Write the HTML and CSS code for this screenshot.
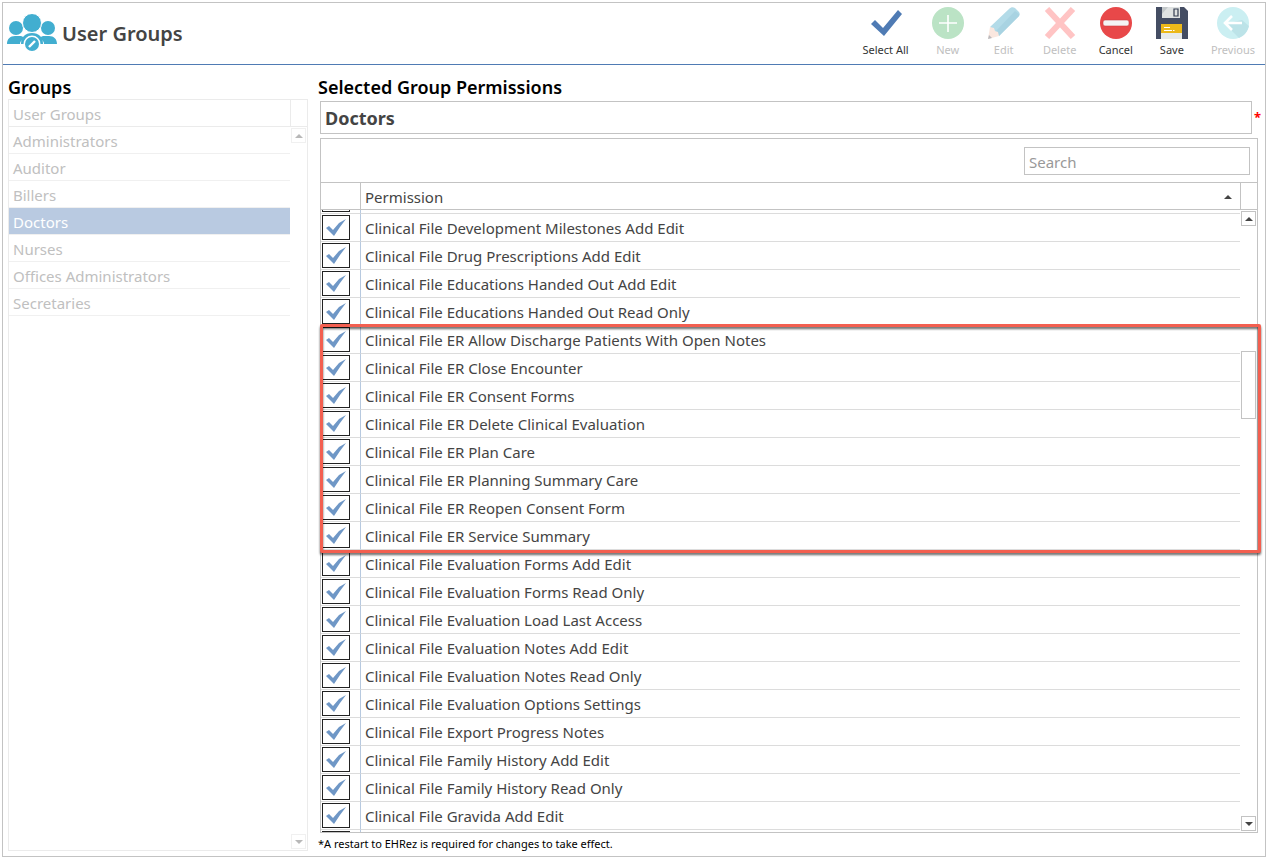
FILE: index.html
```html
<!DOCTYPE html>
<html lang="en">
<head>
<meta charset="UTF-8">
<meta name="viewport" content="width=device-width, initial-scale=1.0">
<title>User Groups</title>
<link rel="stylesheet" href="styles.css">
</head>
<body>
<div class="window">
  <header class="header">
    <svg class="logo" viewBox="0 0 50 38" aria-hidden="true">
      <g fill="#42aed0">
        <circle cx="9" cy="14" r="7"/>
        <circle cx="41" cy="14" r="7"/>
        <path d="M0 30c0-5 3-8 8-8h6c3 1 3 2 3 3-3 1-4 3-4 5z"/>
        <path d="M50 30c0-5-3-8-8-8h-6c-3 1-3 2-3 3 3 1 4 3 4 5z"/>
        <circle cx="25" cy="9" r="9.500" stroke="#fff" stroke-width="1"/>
        <path d="M14 30c0-7 4-11 11-11s11 4 11 11z"/>
      </g>
      <circle cx="25" cy="30" r="8.500" fill="#fff"/>
      <circle cx="25" cy="30" r="7" fill="#42aed0"/>
      <path d="M22 33l6-6" stroke="#fff" stroke-width="2.4"/>
    </svg>
    <h1>User Groups</h1>
    <nav class="toolbar">
      <button type="button">
        <svg viewBox="0 0 32 32"><path d="M1 17l4-4 8 8L28 3l4 4-18 22z" fill="#4f7bb4"/></svg>
        Select All
      </button>
      <button type="button" disabled>
        <svg viewBox="0 0 32 32"><circle cx="16" cy="16" r="16" fill="#bbe3c5"/><path d="M16 8v17M7 16h18" stroke="#fff" stroke-width="1.6"/></svg>
        New
      </button>
      <button type="button" disabled>
        <svg viewBox="0 0 32 32">
          <path d="M2 20L21 2c2-2 4-2 6-1l4 4c1 2 1 3 0 4L11 29z" fill="#b3dbe8"/>
          <path d="M11 29L31 9V7l-4-3L7 25z" fill="#a8d3e2"/>
          <path d="M2 20L0 32l11-3-1-4-3-1-1-3z" fill="#fae7df"/>
          <path d="M1 28l-1 4 4-1z" fill="#b9b9bd"/>
        </svg>
        Edit
      </button>
      <button type="button" disabled>
        <svg viewBox="0 0 32 32"><path d="M3 2l26 28M29 2L3 30" stroke="#ffc4c4" stroke-width="6"/></svg>
        Delete
      </button>
      <button type="button">
        <svg viewBox="0 0 32 32"><circle cx="16" cy="16" r="16" fill="#e84849"/><rect x="3" y="13" width="26" height="6" rx="2" fill="#f4f4f4" stroke="#cf3c3f" stroke-width=".6"/></svg>
        Cancel
      </button>
      <button type="button">
        <svg viewBox="0 0 32 32">
          <path d="M0 0h28l4 4v28H0z" fill="#444d63"/>
          <path d="M6 0h18v11H6z" fill="#dfe2e2"/>
          <path d="M6 0h6L6 7z" fill="#c3c8ca"/>
          <path d="M18 2h4v7h-4z" fill="#dfe2e2" stroke="#343c50" stroke-width="1.2"/>
          <path d="M5 17h21v9H5z" fill="#ecb91a"/>
          <path d="M5 26h21v6H5z" fill="#e8ebeb"/>
          <path d="M8 20.500h6M8 23.500h8M17 23.500h1.500" stroke="#fff" stroke-width="1.200"/>
        </svg>
        Save
      </button>
      <button type="button" disabled>
        <svg viewBox="0 0 32 32">
          <circle cx="16" cy="16" r="16" fill="#cbeff2"/>
          <path d="M8 17l14 14c5-2 9-7 10-12l-7-6z" fill="#bce3e8"/>
          <path d="M25 16H9M15 9l-7 7 7 7" fill="none" stroke="#fff" stroke-width="2.600"/>
        </svg>
        Previous
      </button>
    </nav>
  </header>

  <main class="content">
    <section class="groups">
      <h2>Groups</h2>
      <div class="group-list">
        <table>
          <thead><tr><th>User Groups</th></tr></thead>
          <tbody>
            <tr><td>Administrators</td></tr>
            <tr><td>Auditor</td></tr>
            <tr><td>Billers</td></tr>
            <tr class="selected"><td>Doctors</td></tr>
            <tr><td>Nurses</td></tr>
            <tr><td>Offices Administrators</td></tr>
            <tr><td>Secretaries</td></tr>
          </tbody>
        </table>
        <div class="scrollbar">
          <div class="corner"></div>
          <button type="button" class="arrow up" aria-label="Scroll up" disabled></button>
          <div class="track"></div>
          <button type="button" class="arrow down" aria-label="Scroll down" disabled></button>
        </div>
      </div>
    </section>

    <section class="permissions">
      <h2>Selected Group Permissions</h2>
      <div class="name-row">
        <input type="text" class="group-name" value="Doctors" aria-label="Group name" required>
        <span class="required">*</span>
      </div>
      <div class="grid">
        <div class="grid-search">
          <input type="search" placeholder="Search" aria-label="Search">
        </div>
        <div class="grid-body">
          <div class="grid-scroll" id="grid-scroll">
            <table>
              <thead>
                <tr>
                  <th class="check-col"></th>
                  <th><span class="sortable">Permission</span></th>
                </tr>
              </thead>
              <tbody id="permission-rows"></tbody>
            </table>
          </div>
          <div class="scrollbar">
            <div class="corner"></div>
            <button type="button" class="arrow up" aria-label="Scroll up"></button>
            <div class="track"><div class="thumb"></div></div>
            <button type="button" class="arrow down" aria-label="Scroll down"></button>
          </div>
        </div>
        <div class="highlight"></div>
      </div>
      <p class="note">*A restart to EHRez is required for changes to take effect.</p>
    </section>
  </main>
</div>

<script>
  const permissions = [
    '',
    'Clinical File Development Milestones Add Edit',
    'Clinical File Drug Prescriptions Add Edit',
    'Clinical File Educations Handed Out Add Edit',
    'Clinical File Educations Handed Out Read Only',
    'Clinical File ER Allow Discharge Patients With Open Notes',
    'Clinical File ER Close Encounter',
    'Clinical File ER Consent Forms',
    'Clinical File ER Delete Clinical Evaluation',
    'Clinical File ER Plan Care',
    'Clinical File ER Planning Summary Care',
    'Clinical File ER Reopen Consent Form',
    'Clinical File ER Service Summary',
    'Clinical File Evaluation Forms Add Edit',
    'Clinical File Evaluation Forms Read Only',
    'Clinical File Evaluation Load Last Access',
    'Clinical File Evaluation Notes Add Edit',
    'Clinical File Evaluation Notes Read Only',
    'Clinical File Evaluation Options Settings',
    'Clinical File Export Progress Notes',
    'Clinical File Family History Add Edit',
    'Clinical File Family History Read Only',
    'Clinical File Gravida Add Edit',
    ''
  ];
  const rows = document.getElementById('permission-rows');

  permissions.forEach(function(name, i) {
    const row = document.createElement('tr');
    row.innerHTML = `
      <td class="check-col"><input type="checkbox" id="perm-${i}" checked></td>
      <td><label for="perm-${i}">${name}</label></td>
    `;
    rows.appendChild(row);
  });

  // start with the first row mostly scrolled out of view
  document.getElementById('grid-scroll').scrollTop = 24;
</script>
</body>
</html>
```
FILE: styles.css
```css
* {
  box-sizing: border-box;
}
body {
  margin: 0;
  padding: 2px 4px 4px 2px;
  height: 100vh;
  font-family: "Noto Sans", "Open Sans", sans-serif;
  font-size: 15px;
  color: #444;
  background-color: #fff;
}
button, input {
  font-family: inherit;
}
h1, h2, p {
  margin: 0;
}
.window {
  height: 100%;
  display: flex;
  flex-direction: column;
  border: 1px solid #c3c3c3;
}

/* header */
.header {
  display: flex;
  align-items: flex-start;
  height: 62px;
  padding: 4px 10px 0 4px;
  border-bottom: 1px solid #4f7bb4;
}
.logo {
  width: 50px;
  height: 38px;
  margin-top: 7px;
}
.header h1 {
  margin-left: 5px;
  font-size: 20px;
  line-height: 54px;
  font-weight: 600;
}
.toolbar {
  display: flex;
  gap: 22px;
  margin-left: auto;
}
.toolbar button {
  display: flex;
  flex-direction: column;
  align-items: center;
  gap: 3px;
  min-width: 34px;
  padding: 0;
  border: none;
  background: none;
  font-size: 11px;
  line-height: 16px;
  color: #333;
  cursor: pointer;
}
.toolbar button:disabled {
  color: #c0c0c0;
  cursor: default;
}
.toolbar svg {
  width: 32px;
  height: 32px;
}

/* panels */
.content {
  flex: 1;
  display: flex;
  gap: 10px;
  min-height: 0;
  padding-left: 5px;
}
.content h2 {
  height: 34px;
  padding-top: 5px;
  font-size: 18px;
  line-height: 34px;
  font-weight: 600;
  color: #000;
}
table {
  width: 100%;
  border-collapse: separate;
  border-spacing: 0;
}
th {
  text-align: left;
  font-weight: 400;
}
.groups {
  display: flex;
  flex-direction: column;
  width: 300px;
  padding-bottom: 5px;
}
.group-list {
  flex: 1;
  display: flex;
  align-items: stretch;
  border: 1px solid #ebebeb;
  color: #c0c0c0;
}
.group-list table {
  flex: 1;
  align-self: flex-start;
}
.group-list th, .group-list td {
  height: 27px;
  padding: 2px 4px 0;
  line-height: 24px;
  border-bottom: 1px solid #f0f0f0;
}
.group-list th {
  border-bottom-color: #ebebeb;
}
.group-list .selected td {
  background-color: #b9cae1;
  color: #fff;
}

/* scrollbars */
.scrollbar {
  display: flex;
  flex-direction: column;
  align-items: center;
  width: 17px;
}
.corner {
  width: 100%;
  height: 27px;
  border-left: 1px solid #c3c3c3;
  border-bottom: 1px solid #c3c3c3;
}
.arrow {
  display: flex;
  align-items: center;
  justify-content: center;
  width: 15px;
  height: 15px;
  margin: 1px 0;
  padding: 0;
  border: 1px solid #c3c3c3;
  background-color: #fff;
}
.arrow::before {
  content: "";
  border: 4px solid transparent;
}
.arrow.up::before {
  border-top: none;
  border-bottom-color: #444;
}
.arrow.down::before {
  border-bottom: none;
  border-top-color: #444;
}
.track {
  flex: 1;
  width: 15px;
}
.thumb {
  height: 68px;
  margin-top: 124px;
  border: 1px solid #c3c3c3;
  background-color: #fff;
}
.group-list .corner {
  border-color: #ebebeb;
}
.group-list .arrow {
  border-color: #f0f0f0;
}
.group-list .arrow.up::before {
  border-bottom-color: #b8b8b8;
}
.group-list .arrow.down::before {
  border-top-color: #b8b8b8;
}

/* permissions */
.permissions {
  flex: 1;
  display: flex;
  flex-direction: column;
  min-width: 0;
}
.name-row {
  display: flex;
  margin: 2px 0 4px 2px;
}
.group-name {
  flex: 1;
  min-width: 0;
  height: 33px;
  padding: 0 4px;
  border: 1px solid #c3c3c3;
  font-size: 18px;
  font-weight: 700;
  color: #444;
}
.required {
  width: 13px;
  padding-left: 2px;
  line-height: 33px;
  font-size: 13px;
  font-weight: 700;
  color: #f00;
}
.grid {
  position: relative;
  flex: 1;
  display: flex;
  flex-direction: column;
  min-height: 0;
  margin: 0 7px 0 2px;
  border: 1px solid #c3c3c3;
}
.grid-search {
  display: flex;
  justify-content: flex-end;
  padding: 8px 7px 7px;
  border-bottom: 1px solid #c3c3c3;
}
.grid-search input {
  width: 226px;
  height: 28px;
  padding: 2px 4px 0;
  border: 1px solid #c3c3c3;
  font-size: 15px;
  color: #444;
}
.grid-search input::placeholder {
  color: #999;
}
.grid-body {
  flex: 1;
  display: flex;
  min-height: 0;
}
.grid-scroll {
  flex: 1;
  overflow-y: auto;
  scrollbar-width: none;
}
.grid th {
  position: sticky;
  top: 0;
  z-index: 1;
  height: 27px;
  padding: 2px 8px 0 4px;
  line-height: 24px;
  border-bottom: 1px solid #c3c3c3;
  background-color: #fff;
}
.grid td {
  height: 28px;
  padding: 2px 4px 0;
  line-height: 25px;
  border-bottom: 1px solid #dcdcdc;
}
.grid .check-col {
  width: 40px;
  padding: 1px;
  border-right: 1px solid #b7c9df;
}
.grid th.check-col {
  border-right-color: #c3c3c3;
}
.sortable {
  display: flex;
  align-items: center;
  justify-content: space-between;
}
.sortable::after {
  content: "";
  border: 4px solid transparent;
  border-top: none;
  border-bottom-color: #444;
}
.check-col input {
  appearance: none;
  display: block;
  width: 28px;
  height: 25px;
  margin: 0;
  border: 1px solid #222;
  background-color: #fff;
}
.check-col input:checked::before {
  content: "";
  display: block;
  width: 26px;
  height: 23px;
  background-color: #6f97c6;
  clip-path: polygon(3px 12px, 6px 10px, 10px 14px, 16px 7px, 23px 3px, 17px 11px, 11px 20px);
}
.highlight {
  position: absolute;
  top: 185px;
  left: -1px;
  right: -4px;
  height: 229px;
  border: 3px solid #f35f50;
  border-radius: 2px;
  filter: drop-shadow(0 2px 1px rgba(0, 0, 0, 0.6));
  pointer-events: none;
}
.note {
  height: 23px;
  line-height: 22px;
  font-size: 11px;
  color: #000;
}
```
